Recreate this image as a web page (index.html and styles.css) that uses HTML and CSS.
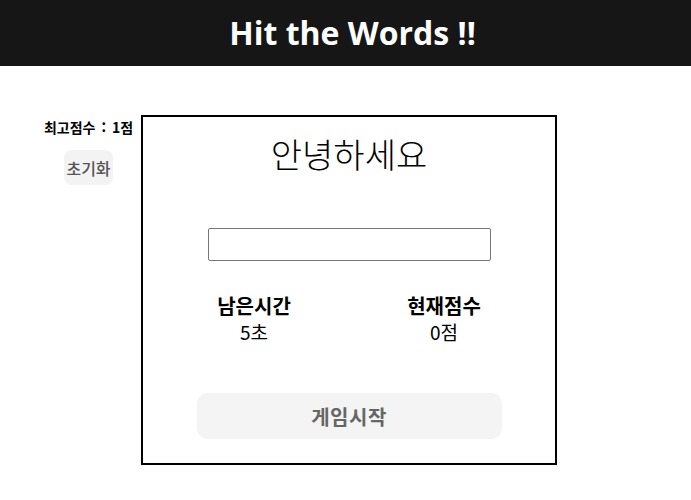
FILE: index.html
```html
<!DOCTYPE html>
<html lang="ko">
<head>
<meta charset="utf-8">
<title>Hit the Words !!</title>
<link rel="stylesheet" href="styles.css">
</head>
<body>
<header class="header">
  <h1 class="header-title">Hit the Words !!</h1>
</header>
<main class="main">
  <aside class="side">
    <div class="best">최고점수 : 1점</div>
    <button class="reset-btn" type="button">초기화</button>
  </aside>
  <section class="game">
    <div class="word">안녕하세요</div>
    <input class="word-input" type="text">
    <div class="stats">
      <div class="stat">
        <div class="stat-label">남은시간</div>
        <div class="stat-value">5초</div>
      </div>
      <div class="stat">
        <div class="stat-label">현재점수</div>
        <div class="stat-value">0점</div>
      </div>
    </div>
    <button class="start-btn" type="button">게임시작</button>
  </section>
</main>
</body>
</html>
```
FILE: styles.css
```css
* { box-sizing: border-box; }
body {
  margin: 0;
  font-family: "Noto Sans CJK KR", "Noto Sans", sans-serif;
  color: #000;
  background: #fff;
}
.header {
  height: 66px;
  background: #161616;
  display: flex;
  align-items: center;
  justify-content: center;
  padding-left: 14px;
}
.header-title {
  margin: 0;
  color: #fff;
  font-family: "Open Sans", "Noto Sans CJK KR", sans-serif;
  font-weight: 700;
  font-size: 32px;
  line-height: 40px;
}
.main {
  display: flex;
  align-items: flex-start;
  padding: 49px 0 0 36px;
}
.side {
  width: 105px;
  display: flex;
  flex-direction: column;
  align-items: center;
  padding-top: 2px;
}
.best {
  font-size: 14px;
  font-weight: 700;
  line-height: 20px;
  word-spacing: 2px;
  white-space: nowrap;
}
.reset-btn {
  margin-top: 13px;
  width: 49px;
  height: 35px;
  padding: 0;
  border: none;
  border-radius: 8px;
  background: #f3f3f3;
  color: #555;
  font-family: inherit;
  font-size: 16px;
  font-weight: 500;
}
.game {
  width: 416px;
  height: 350px;
  border: 2px solid #000;
  display: flex;
  flex-direction: column;
  align-items: center;
  padding-top: 17px;
}
.word {
  font-size: 34px;
  line-height: 40px;
  font-weight: 300;
}
.word-input {
  margin-top: 54px;
  width: 283px;
  height: 33px;
  border: 1px solid #767676;
  border-radius: 2px;
  font-family: inherit;
}
.stats {
  margin-top: 32px;
  display: grid;
  grid-template-columns: 190px 190px;
}
.stat {
  text-align: center;
  font-size: 20px;
  line-height: 26px;
}
.stat-label { font-weight: 700; }
.stat-value { font-weight: 400; font-size: 19px; }
.start-btn {
  margin-top: 48px;
  width: 305px;
  height: 46px;
  border: none;
  border-radius: 10px;
  background: #f4f4f4;
  color: #666;
  font-family: inherit;
  font-size: 20px;
  font-weight: 700;
  letter-spacing: 0.5px;
}
```
